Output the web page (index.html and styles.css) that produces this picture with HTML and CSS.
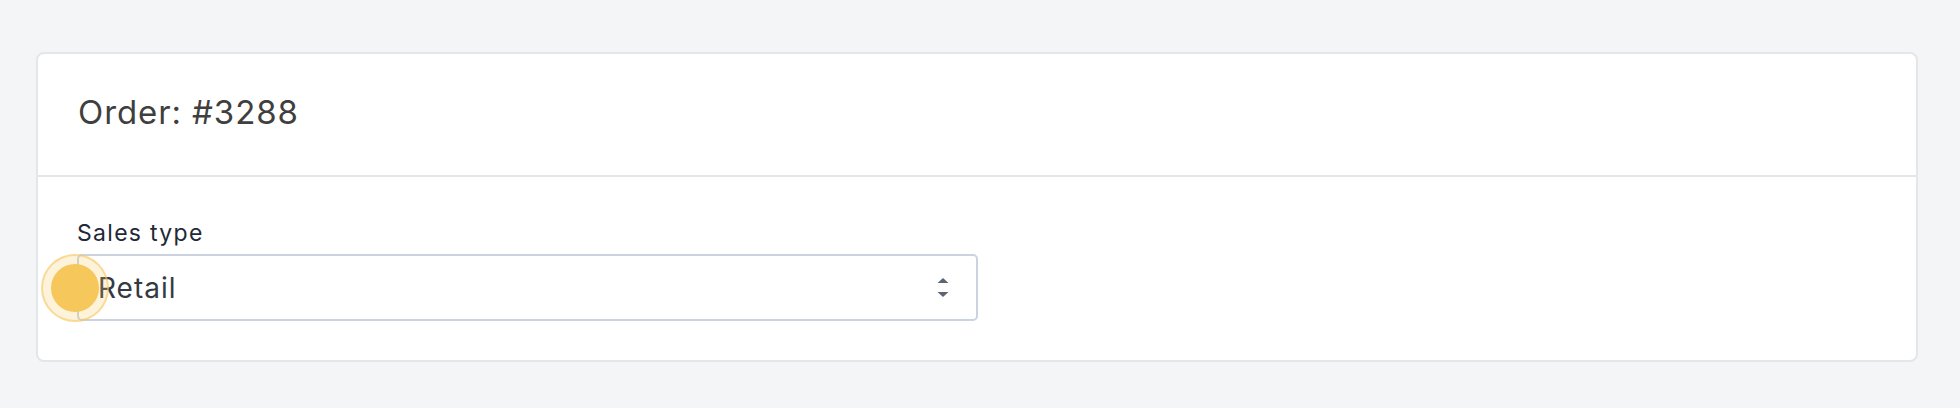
FILE: index.html
```html
<!DOCTYPE html>
<html>
<head>
<meta charset="utf-8">
<link rel="stylesheet" href="styles.css">
</head>
<body>
<div class="page">
  <div class="card">
    <div class="card-header">
      <h1 class="title">Order: #3288</h1>
    </div>
    <div class="card-body">
      <label class="label">Sales type</label>
      <div class="select">
        <span class="select-value">Retail</span>
        <svg class="select-arrows" width="12" height="20" viewBox="0 0 12 20">
          <path d="M0.5 5 L6 0 L11.5 5 Z" fill="#5b6573"/>
          <path d="M0.5 14 L11.5 14 L6 19 Z" fill="#5b6573"/>
        </svg>
        <div class="click-ring"><div class="click-dot"></div></div>
      </div>
    </div>
  </div>
</div>
</body>
</html>
```

FILE: styles.css
```css
html, body {
  margin: 0;
  padding: 0;
  background: #f4f5f7;
}
.page {
  padding: 52px 42px 47px 36px;
  font-family: Inter, "Noto Sans", sans-serif;
}
.card {
  background: #ffffff;
  border: 2px solid #e3e6ea;
  border-radius: 8px;
}
.card-header {
  box-sizing: border-box;
  border-bottom: 2px solid #e3e6ea;
  height: 123px;
  display: flex;
  align-items: center;
  padding: 0 0 5px 40px;
}
.title {
  margin: 0;
  font-size: 33px;
  font-weight: 400;
  letter-spacing: 0.9px;
  color: #3f3f3f;
  line-height: 40px;
}
.card-body {
  padding: 41px 40px 39px 39px;
  display: flex;
  flex-direction: column;
}
.label {
  font-size: 23px;
  letter-spacing: 1.3px;
  line-height: 30px;
  color: #1f2937;
  margin-bottom: 6px;
}
.select {
  position: relative;
  box-sizing: border-box;
  width: 901px;
  height: 67px;
  border: 2px solid #cbd3de;
  border-radius: 5px;
  display: flex;
  align-items: center;
  justify-content: space-between;
  padding: 0 27px 0 19px;
}
.select-value {
  font-size: 28px;
  letter-spacing: 1px;
  color: #333a44;
}
.select-arrows {
  display: block;
}
.click-ring {
  position: absolute;
  left: -38px;
  top: -2px;
  width: 64px;
  height: 64px;
  border-radius: 50%;
  background: rgba(248, 200, 90, 0.22);
  border: 2px solid rgba(245, 196, 90, 0.55);
  display: flex;
  align-items: center;
  justify-content: center;
}
.click-dot {
  width: 48px;
  height: 48px;
  border-radius: 50%;
  background: #f6c75a;
}
```
